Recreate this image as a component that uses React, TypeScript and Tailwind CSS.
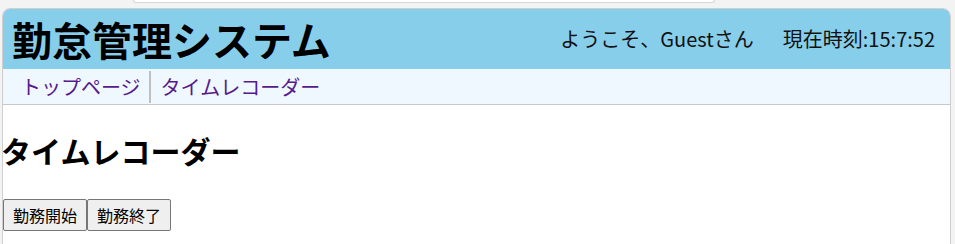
export default function App() {
  const font = { fontFamily: '"Noto Sans CJK JP", "Noto Sans", sans-serif' };

  return (
    <div className="h-[244px] overflow-hidden bg-[#f3f3f3] pl-[2px] pr-[4px]" style={font}>
      {/* top strip */}
      <div className="h-[8px]">
        <div className="ml-[131px] h-[3px] w-[582px] rounded-b-[4px] border-x border-b border-[#d6d6d6] bg-white" />
      </div>

      <div className="h-[260px] overflow-hidden rounded-t-[8px] border border-[#cfcfcf] bg-white">
        {/* header */}
        <header className="flex h-[60px] items-center justify-between bg-[#87ceeb] pl-[9px] pr-[15px]">
          <h1 className="text-[40px] font-bold leading-none text-black">勤怠管理システム</h1>
          <div className="flex items-center gap-[29px] text-[20px] text-[#111]">
            <span>ようこそ、Guestさん</span>
            <span>現在時刻:15:7:52</span>
          </div>
        </header>

        {/* nav */}
        <nav className="flex h-[36px] items-center border-b border-[#c8c8c8] bg-[#f0f8ff] pl-[8px] text-[20px] text-[#551a8b]">
          <a className="pl-[10px] pr-[8px] leading-[28px]">トップページ</a>
          <span className="h-[32px] w-[2px] bg-[#c0c0c0]" />
          <a className="px-[10px] leading-[28px]">タイムレコーダー</a>
        </nav>

        {/* body */}
        <main className="pt-[23px]">
          <h2 className="-ml-[2px] text-[30px] font-bold leading-[45px] text-black">タイムレコーダー</h2>
          <div className="mt-[26px] flex">
            <button className="h-[32px] rounded-[2px] border border-[#767676] bg-[#efefef] px-[9px] text-[16px] text-black">
              勤務開始
            </button>
            <button className="h-[32px] rounded-[2px] border border-[#767676] bg-[#efefef] px-[9px] text-[16px] text-black">
              勤務終了
            </button>
          </div>
        </main>
      </div>
    </div>
  );
}
